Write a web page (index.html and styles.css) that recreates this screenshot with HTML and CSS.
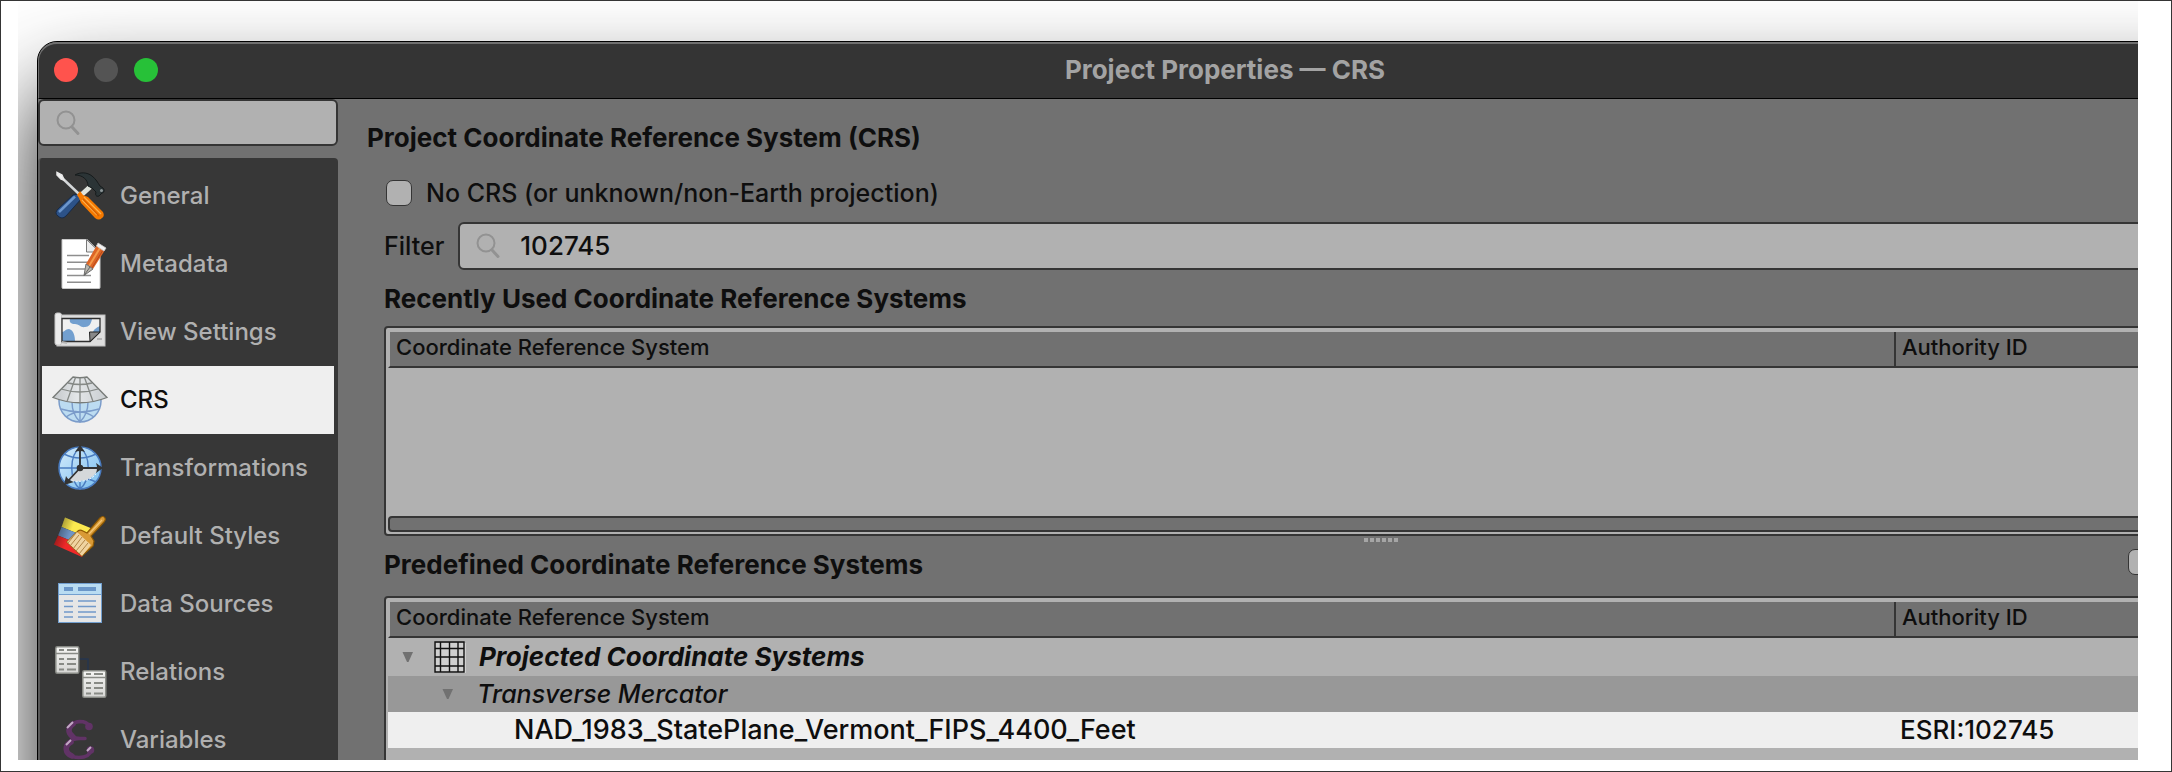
FILE: index.html
```html
<!DOCTYPE html>
<html lang="en">
<head>
<meta charset="utf-8">
<title>Project Properties — CRS</title>
<link rel="stylesheet" href="styles.css">
</head>
<body>
<div class="stage">
<div class="window">
  <header class="titlebar">
    <div class="lights">
      <button class="light light-close" aria-label="Close"></button>
      <button class="light light-min" aria-label="Minimize"></button>
      <button class="light light-zoom" aria-label="Zoom"></button>
    </div>
    <h1 class="title">Project Properties — CRS</h1>
  </header>
  <div class="body">
    <aside class="sidebar">
      <label class="field field-search">
        <svg class="glass" viewBox="0 0 26 26"><circle cx="11" cy="10" r="8.5"/><path d="M17 17l6 6.500" class="grip"/></svg>
        <input class="field-input" type="text" aria-label="Search">
      </label>
      <nav class="nav">
        <a class="item" href="#general">
          <svg class="icon" viewBox="0 0 56 56">
            <path d="M38 19L27 29" stroke="#dfe3dc" stroke-width="5"/>
            <path d="M23 7C28 4 35 4 40 8C44 11 46 15 48 18L51 20C53 22 52 25 50 25L47 28C44 29 43 27 44 24L40 20L36 18C36 12 31 7 23 7Z" fill="#2b3436" stroke="#161b1c"/>
            <circle cx="49.500" cy="22.500" r="1.500" fill="#8d9698"/>
            <path d="M26 26L30 30L14 48Q10 52 6 48Q2 45 6 41L21 27Z" fill="#2c5288" stroke="#172a47"/>
            <path d="M23 28.500L7 44" stroke="#6c96cc" stroke-width="2.500"/>
            <path d="M8 8L27 26" stroke="#d4d7d9" stroke-width="2.500"/>
            <path d="M5 4.500L10 7L12 12L9 11L5 7Z" fill="#f3f3f3" stroke="#e8e8e8" stroke-width="1.500"/>
            <path d="M25 27L28 23L31 27L36 29L51 44Q53 48 50 50Q47 53 43 50L29 35L27 30Z" fill="#f57900"/>
            <path d="M32 29L49 46M30 32L45 47" stroke="#ffb04a" stroke-width="1.300"/>
            <path d="M31 31L47 48" stroke="#d85f00" stroke-width="1.300"/>
          </svg>
          <span>General</span></a>
        <a class="item" href="#metadata">
          <svg class="icon" viewBox="0 0 56 56">
            <path d="M10 3.500H35L48 16V51.500Q48 52.500 47 52.500H11Q10 52.500 10 51.500Z" fill="#fff" stroke="#c9c9c9"/>
            <path d="M34.500 3.500V16H47.500Z" fill="#ececec" stroke="#777"/>
            <path d="M15 19.500H37M15 26.300H39M15 33H33M15 39.500H39M15 46.200H39" stroke="#8e8e8e" stroke-width="1.500"/>
            <path d="M45 9L53 14L41 33L34 28Z" fill="#dd6526"/>
            <path d="M48 12L37 30" stroke="#f59a4a" stroke-width="2"/>
            <path d="M51 14L40 32" stroke="#b8481a" stroke-width="1"/>
            <path d="M34 28L41 33L32 39.500Z" fill="#b9b6ae" stroke="#6e6e6e"/>
            <path d="M38 31L32 39.500" stroke="#666"/>
            <path d="M46 7L54 12L52 15L44.500 10Z" fill="#f3f3f3" stroke="#ccc" stroke-width=".8"/>
          </svg>
          <span>Metadata</span></a>
        <a class="item" href="#view">
          <svg class="icon" viewBox="0 0 56 56">
            <rect x="5" y="11" width="48" height="31" fill="#dedede" stroke="#bfbfbf"/>
            <rect x="3" y="9" width="6.500" height="32" rx="2" fill="#ebebeb" stroke="#c6c6c6"/>
            <path d="M10 14.500H48V28L38 37.500H10Z" fill="#f0f0f0"/>
            <path d="M18 15H40C39 20 37 23 33 23C29 24 27 20 23 20C19 20 17 18 18 15Z" fill="#729fcf"/>
            <path d="M48 22V28L41 28C42 25 44 24 48 22Z" fill="#729fcf"/>
            <path d="M10 28C13 28 13 25 17 25C22 26 23 33 23 37H10Z" fill="#729fcf"/>
            <path d="M10 14.500H48V28L38 37.500H10Z" fill="none" stroke="#2f2f2f" stroke-width="1.300"/>
            <path d="M37.500 28H48L38 37.500Z" fill="#888" stroke="#222"/>
            <path d="M45 35H50M10 38L15 39" stroke="#b5b5b5" stroke-width="2"/>
          </svg>
          <span>View Settings</span></a>
        <a class="item item-current" href="#crs" aria-current="page">
          <svg class="icon" viewBox="0 0 56 56">
            <defs><linearGradient id="cone"><stop offset="0" stop-color="#c4c8cb"/><stop offset=".45" stop-color="#e3e6e8"/><stop offset="1" stop-color="#c9cdd0"/></linearGradient></defs>
            <circle cx="28" cy="29" r="21" fill="#bcdcf1" stroke="#7b9cca" stroke-width="1.500"/>
            <path d="M20 30C20 40 24 46 28 50C32 46 36 40 36 30M28 30V50M9 37Q28 43 47 37M14 45Q28 35 42 45" fill="none" stroke="#7b9cca" stroke-width="1.400"/>
            <path d="M21 5Q28 6.500 35 5L55 25.500Q28 36 1 25.500Z" fill="url(#cone)" stroke="#777b78" stroke-width="1.300"/>
            <path d="M16 11Q28 14 40 11M9 17Q28 23 46 17M23.500 5.500L15 29.500M32.500 5.500L41 29.500M28 6V31" fill="none" stroke="#858986" stroke-width="1.300"/>
          </svg>
          <span>CRS</span></a>
        <a class="item" href="#transformations">
          <svg class="icon" viewBox="0 0 56 56">
            <defs><linearGradient id="sea" x1="0" y1="0" x2="1" y2="1"><stop offset="0" stop-color="#d3ebfb"/><stop offset="1" stop-color="#79bdee"/></linearGradient></defs>
            <circle cx="28" cy="28" r="21" fill="url(#sea)" stroke="#4a7cc0" stroke-width="1.500"/>
            <path d="M7 28H49M12 14Q28 22 44 14M12 42Q28 34 44 42M28 7V49M28 7C17 16 17 40 28 49C39 40 39 16 28 7" fill="none" stroke="#4a7cc0" stroke-width="1.400"/>
            <path d="M28 28H46C44 37 34 42 20 41L16 39Z" fill="#d5d8da"/>
            <path d="M20 41Q36 43 44 34" fill="none" stroke="#fff" stroke-width="1" stroke-dasharray="2 1.500"/>
            <path d="M28 28V9M28 28H47M28 28L16 41" stroke="#333" stroke-width="1.800"/>
            <path d="M28 5L33 12Q28 10 23 12ZM51 28L44 33Q46 28 44 23ZM12 45L14 36Q16 40 22 42Z" fill="#333"/>
            <circle cx="28" cy="28" r="3.300" fill="#333"/>
          </svg>
          <span>Transformations</span></a>
        <a class="item" href="#styles">
          <svg class="icon" viewBox="0 0 56 56">
            <defs><linearGradient id="fade" x1="0" y1="0" x2="1" y2=".4"><stop offset="0" stop-color="#000" stop-opacity=".6"/><stop offset=".5" stop-color="#000" stop-opacity="0"/></linearGradient></defs>
            <path d="M13 9.500L41 21L37 30L9.500 19Z" fill="#fce94f"/>
            <path d="M9.500 19L37 30L34 39L6 27.500Z" fill="#6f95c6"/>
            <path d="M6 27.500L34 39L30 49L2 36.500Z" fill="#ef2929"/>
            <path d="M13 9.500L41 21L30 49L2 36.500Z" fill="url(#fade)"/>
            <path d="M48 10Q51 7 53 10Q54 12 52 14L39 28L42 33L41 38L30 48L15 34L25 24Q27 21 31 23L35 25Z" fill="#d99a36" stroke="#8f5902" stroke-width="1.200"/>
            <path d="M25 24L39 37L30 48L15 34Z" fill="#efd3a0"/>
            <path d="M24 25L16 35M27 27L18 38M30 29L21 41M33 32L24 43M36 35L27 46" stroke="#a87a3c" stroke-width=".9"/>
            <path d="M50 12L37 26" stroke="#f3c676" stroke-width="1.300"/>
          </svg>
          <span>Default Styles</span></a>
        <a class="item" href="#data">
          <svg class="icon" viewBox="0 0 56 56">
            <rect x="6.500" y="7.500" width="43" height="39" fill="#e6e6e6" stroke="#729fcf"/>
            <path d="M7 8H49V18.500H7Z" fill="#b9dcf2"/>
            <path d="M7 18.500H49" stroke="#729fcf" stroke-width="1.200"/>
            <path d="M12 13H21M26 13H44" stroke="#6a96c8" stroke-width="4"/>
            <path d="M12 25H21M26 25H44M12 30.500H21M26 30.500H44M12 36H21M26 36H44M12 41H21M26 41H44" stroke="#7199ca" stroke-width="1.700"/>
          </svg>
          <span>Data Sources</span></a>
        <a class="item" href="#relations">
          <svg class="icon" viewBox="0 0 56 56">
            <defs>
              <linearGradient id="paper" x1="0" y1="0" x2="0" y2="1"><stop offset="0" stop-color="#f5f5f3"/><stop offset="1" stop-color="#d6d6d4"/></linearGradient>
              <g id="sheet">
                <rect x=".8" y=".8" width="23" height="26.500" rx="1.500" fill="url(#paper)" stroke="#888a85" stroke-width="1.500"/>
                <path d="M1 7.500H24" stroke="#888a85" stroke-width="1.500"/>
                <path d="M4 4H9M12 4H21M4 13H9M12 13H21M4 18H9M12 18H21M4 23.500H9M12 23.500H21" stroke="#888a85" stroke-width="1.800"/>
              </g>
            </defs>
            <path d="M27 15H36V27" fill="none" stroke="#26364f" stroke-width="1.500"/>
            <use href="#sheet" x="3" y="2"/><use href="#sheet" x="30" y="26"/>
          </svg>
          <span>Relations</span></a>
        <a class="item" href="#variables">
          <svg class="icon" viewBox="0 0 56 56">
            <g fill="none" stroke="#613366" stroke-linecap="round">
              <path d="M37 14C35 10 32 9.500 28 9.500C14 10 14 26 28 26.500H33M28 26.500C9 27 9 45.500 27 45.500C34 45.500 38 43 39.500 38" stroke-width="3.500"/>
              <path d="M21 12C15 16 16 21 21 25M19 30C12 34 13 41 20 44" stroke-width="5.500"/>
            </g>
            <circle cx="37" cy="14.500" r="3.800" fill="#613366"/>
            <circle cx="38.500" cy="38" r="3.800" fill="#613366"/>
            <path d="M15 16L21 10M14 33L19 28M35 39L39 35" stroke="#c3a9c6" stroke-width="2"/>
          </svg>
          <span>Variables</span></a>
      </nav>
    </aside>
    <main class="main">
      <h2 class="heading heading-page">Project Coordinate Reference System (CRS)</h2>
      <label class="check"><input class="box" type="checkbox"><span>No CRS (or unknown/non-Earth projection)</span></label>
      <div class="filter">
        <label for="filter">Filter</label>
        <div class="field field-filter">
          <svg class="glass" viewBox="0 0 26 26"><circle cx="11" cy="10" r="8.500"/><path d="M17 17l6 6.500" class="grip"/></svg>
          <input class="field-input" id="filter" type="text" value="102745">
        </div>
      </div>
      <h2 class="heading heading-recent">Recently Used Coordinate Reference Systems</h2>
      <div class="tree tree-recent">
        <table class="grid">
          <colgroup><col><col class="col-id"></colgroup>
          <thead><tr><th>Coordinate Reference System</th><th>Authority ID</th></tr></thead>
        </table>
        <div class="scrollbar"></div>
      </div>
      <div class="splitter"><i></i><i></i><i></i><i></i><i></i><i></i></div>
      <div class="predefined">
        <h2 class="heading">Predefined Coordinate Reference Systems</h2>
        <input class="box" type="checkbox" aria-label="Hide deprecated CRSs">
      </div>
      <div class="tree tree-predefined">
        <table class="grid">
          <colgroup><col><col class="col-id"></colgroup>
          <thead><tr><th>Coordinate Reference System</th><th>Authority ID</th></tr></thead>
          <tbody>
            <tr class="row-group"><td><div class="cell">
              <svg class="arrow" viewBox="0 0 12 12"><path d="M.5 1H11L6.500 11H5Z"/></svg>
              <svg class="gridicon" viewBox="0 0 32 32"><rect x="2" y="2" width="30" height="30" fill="#d0d0d0"/><path d="M1 1H30V31H1ZM6.500 1V31M15.500 1V31M24 1V31M1 7.500H30M1 16H30M1 25H30" fill="none" stroke="#111" stroke-width="1.400"/></svg>
              <span>Projected Coordinate Systems</span></div></td><td></td></tr>
            <tr class="row-sub"><td><div class="cell">
              <svg class="arrow" viewBox="0 0 12 12"><path d="M.5 1H11L6.500 11H5Z"/></svg>
              <span>Transverse Mercator</span></div></td><td></td></tr>
            <tr class="row-leaf"><td><div class="cell">NAD_1983_StatePlane_Vermont_FIPS_4400_Feet</div></td><td>ESRI:102745</td></tr>
          </tbody>
        </table>
      </div>
    </main>
  </div>
</div>
</div>
</body>
</html>
```
FILE: styles.css
```css
* { box-sizing: border-box; }

body {
  margin: 0;
  height: 100vh;
  display: flex;
  padding: 0 33px 11px 17px;
  border: 1px solid #353535;
  background: #fff;
  color: #0e0e0e;
  font-family: Inter, "Liberation Sans", sans-serif;
  font-size: 25px;
  font-weight: 500;
  line-height: 32px;
}

.stage {
  flex: 1;
  min-width: 0;
  display: flex;
  overflow: hidden;
}

/* The dialog runs on past the right and bottom edges of the stage. */
.window {
  flex: 1 0 auto;
  width: calc(100% + 256px);
  display: flex;
  flex-direction: column;
  margin: 40px 0 -60px 19px;
  border: 1px solid #000;
  border-radius: 20px 20px 0 0;
  background: #717171;
  box-shadow: 0 50px 90px rgba(0, 0, 0, .85);
  overflow: hidden;
}

.titlebar {
  display: grid;
  grid-template-columns: 1fr auto 1fr;
  align-items: center;
  height: 57px;
  padding: 0 16px 2px 15px;
  border-top: 2px solid #6f6f6f;
  border-left: 1px solid #6f6f6f;
  border-bottom: 1px solid #000;
  border-radius: 19px 0 0 0;
  background: #343434;
}

.lights { display: flex; gap: 16px; }
.light {
  width: 24px;
  height: 24px;
  padding: 0;
  border: 0;
  border-radius: 50%;
}
.light-close { background: #ff534d; }
.light-min { background: #545454; }
.light-zoom { background: #27c138; }

.title {
  margin: 0;
  font-size: 26px;
  font-weight: 700;
  color: #a3a3a3;
}

.body { flex: 1; display: flex; }

.sidebar {
  width: 300px;
  display: flex;
  flex-direction: column;
  gap: 12px;
}

.field {
  display: flex;
  align-items: center;
  height: 48px;
  padding-left: 15px;
  gap: 19px;
  border: 2px solid #353535;
  border-radius: 6px;
  background: #b1b1b1;
}
.field-search { height: 47px; }
.field-input {
  flex: 1;
  min-width: 0;
  border: 0;
  padding: 0;
  background: transparent;
  color: #0e0e0e;
  font: inherit;
  font-size: 26px;
  outline: 0;
}
.glass {
  width: 26px;
  height: 26px;
  fill: none;
  stroke: #929292;
  stroke-width: 2;
}
.grip { stroke-width: 3; stroke-linecap: round; }

.nav {
  flex: 1;
  padding: 4px 4px 4px 2px;
  border-left: 2px solid #5a5a5a;
  border-radius: 4px 4px 0 0;
  background: #373737;
}
.item {
  display: flex;
  align-items: center;
  gap: 12px;
  height: 68px;
  padding-left: 10px;
  color: #b0b0b0;
  font-size: 24px;
  text-decoration: none;
}
.item-current { background: #efefef; color: #0e0e0e; }
.icon { width: 56px; height: 56px; fill: none; }

.main {
  flex: 1;
  min-width: 0;
  display: flex;
  flex-direction: column;
  padding: 23px 34px 0 46px;
}
.heading {
  margin: 0;
  font-size: 26px;
  font-weight: 700;
  line-height: 32px;
}
.heading-page { margin-left: -17px; }
.heading-recent { margin: 13px 0 11px; }

.check {
  display: flex;
  align-items: center;
  gap: 14px;
  margin: 23px 0 13px 2px;
}
.box {
  appearance: none;
  width: 26px;
  height: 26px;
  margin: 0;
  border: 1px solid #353535;
  border-radius: 7px;
  background: #b1b1b1;
}

.filter { display: flex; align-items: center; gap: 14px; }
.field-filter { flex: 1; }

.tree {
  display: flex;
  flex-direction: column;
  border: 2px solid #353535;
  border-radius: 4px;
  background: #b1b1b1;
}
.tree-recent { height: 210px; padding: 4px 2px 2px; }
.tree-predefined { flex: 1; padding: 4px 2px 0; }

.grid {
  width: 100%;
  table-layout: fixed;
  border-collapse: separate;
  border-spacing: 0;
}
.col-id { width: 480px; }
.grid th {
  height: 36px;
  padding: 0 0 4px 6px;
  border-bottom: 2px solid #353535;
  border-left: 2px solid #b1b1b1;
  background: #717171;
  font-size: 22px;
  font-weight: 500;
  line-height: 28px;
  text-align: left;
}
.grid th + th { border-left-color: #353535; }
.grid td { height: 36px; padding: 0; }
.grid td + td { padding-left: 6px; }
.cell { display: flex; align-items: center; }
.row-group td { height: 38px; font-size: 26px; font-weight: 700; font-style: italic; }
.row-group .cell { padding-left: 14px; }
.row-sub { background: #989898; font-style: italic; }
.row-sub .cell { padding-left: 54px; gap: 23px; }
.row-leaf { background: #efefef; font-size: 26px; }
.row-leaf .cell { padding-left: 126px; font-size: 27px; }
.arrow { width: 12px; height: 12px; fill: #717171; }
.gridicon { width: 32px; height: 32px; margin: 0 13px 0 20px; }

.scrollbar {
  height: 16px;
  margin-top: auto;
  border: 2px solid #353535;
  border-radius: 4px;
  background: #717171;
}

.splitter {
  display: flex;
  justify-content: center;
  gap: 2px;
  padding: 2px 0 7px;
}
.splitter i { width: 4px; height: 4px; background: #a5a5a5; }

.predefined {
  display: flex;
  justify-content: space-between;
  align-items: flex-start;
  margin-bottom: 15px;
  padding-right: 224px;
}
```
